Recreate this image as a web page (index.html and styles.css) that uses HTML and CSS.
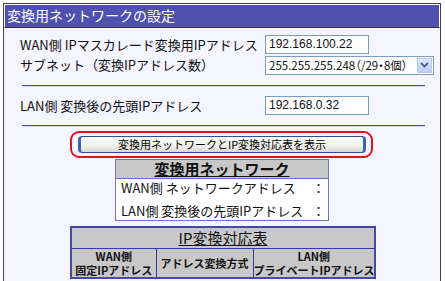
FILE: index.html
```html
<!DOCTYPE html>
<html lang="ja">
<head>
<meta charset="utf-8">
<link rel="stylesheet" href="styles.css">
</head>
<body>
<div class="panel">
  <div class="title">変換用ネットワークの設定</div>
  <div class="content">
    <div class="row r1">
      <span class="label">WAN側 IPマスカレード変換用IPアドレス</span>
      <span class="input">192.168.100.22</span>
    </div>
    <div class="row r2">
      <span class="label">サブネット（変換IPアドレス数）</span>
      <span class="select"><span class="sel-text">255.255.255.248（/29・8個）</span><span class="sel-btn"><svg width="9" height="6" viewBox="0 0 9 6"><path d="M1 1 L4.5 4.5 L8 1" fill="none" stroke="#4d6185" stroke-width="1.8"/></svg></span></span>
    </div>
    <div class="rule rule1"></div>
    <div class="row r3">
      <span class="label">LAN側 変換後の先頭IPアドレス</span>
      <span class="input">192.168.0.32</span>
    </div>
    <div class="rule rule2"></div>
    <div class="btn-wrap">
      <div class="highlight">
        <div class="button">変換用ネットワークとIP変換対応表を表示</div>
      </div>
    </div>
    <table class="net">
      <tr><th>変換用ネットワーク</th></tr>
      <tr><td><div class="kv"><span>WAN側 ネットワークアドレス</span><span>：</span></div><div class="kv kv2"><span>LAN側 変換後の先頭IPアドレス</span><span>：</span></div></td></tr>
    </table>
    <table class="map">
      <colgroup><col class="c1"><col class="c2"><col class="c3"></colgroup>
      <tr><th colspan="3" class="cap">IP変換対応表</th></tr>
      <tr class="sub"><th>WAN側<br>固定IPアドレス</th><th>アドレス変換方式</th><th>LAN側<br>プライベートIPアドレス</th></tr>
    </table>
  </div>
</div>
</body>
</html>
```

FILE: styles.css
```css
html, body {
  margin: 0;
  padding: 0;
  background: #ffffff;
}
body {
  font-family: "Noto Sans CJK JP", "Noto Sans", sans-serif;
  color: #111;
  overflow: hidden;
  height: 281px;
}
.panel {
  margin: 3px 0 0 3px;
  width: 438px;
  height: 290px;
  border: 1px solid #444;
  border-bottom: none;
  background: #f5f5ff;
  box-sizing: border-box;
}
.title {
  height: 22px;
  line-height: 20px;
  background: #5050b0;
  color: #fff;
  font-size: 14px;
  padding-left: 2px;
  border: 1px solid #fff;
  border-bottom: 1px solid #333;
}
.content {
  padding: 7px 0 0 16px;
}
.row {
  display: flex;
  align-items: center;
  font-size: 13px;
  line-height: 18px;
}
.label {
  width: 245px;
  flex: none;
  white-space: nowrap;
}
.r1 { height: 19px; }
.r2 { height: 20px; margin-top: 1px; }
.r3 { height: 19px; }
.input {
  display: block;
  width: 104px;
  height: 19px;
  box-sizing: border-box;
  border: 1px solid #7f9db9;
  background: #fff;
  font-family: "Liberation Sans", Arial, sans-serif;
  font-size: 12px;
  line-height: 17px;
  padding-left: 3px;
}
.select {
  display: flex;
  width: 169px;
  height: 19px;
  flex: none;
  box-sizing: border-box;
  border: 1px solid #7f9db9;
  background: #fff;
  font-size: 11.5px;
  font-feature-settings: "palt";
  line-height: 17px;
  padding: 0 1px 0 3px;
  align-items: center;
}
.sel-text { flex: 1; white-space: nowrap; overflow: hidden; }
.sel-btn {
  width: 15px;
  height: 15px;
  flex: none;
  background: linear-gradient(#dfe9fb, #b8cdf5);
  border: 1px solid #b5c8ef;
  box-sizing: border-box;
  display: flex;
  align-items: center;
  justify-content: center;
}
.rule {
  width: 403px;
  margin-left: 2px;
  height: 1px;
  background: #4848a8;
  border-bottom: 1px solid #d8d8f0;
}
.rule1 { margin-top: 10px; margin-bottom: 9px; }
.rule2 { margin-top: 10px; margin-bottom: 4px; }
.btn-wrap {
  display: flex;
  padding-left: 50px;
}
.highlight {
  border: 2px solid #e8101c;
  border-radius: 9px;
  padding: 3px 5px 3px 6px;
}
.button {
  width: 288px;
  height: 17px;
  box-sizing: border-box;
  border: 1px solid #2f4f94;
  border-left: 3px solid #3a64b0;
  border-right: 3px solid #3a64b0;
  border-radius: 4px;
  background: linear-gradient(#ffffff, #f0f0ea 60%, #d8d8d0);
  font-size: 11px;
  line-height: 15px;
  text-align: center;
  color: #000;
}
table {
  border-collapse: collapse;
  table-layout: fixed;
}
.net {
  margin: 1px 0 0 95px;
  width: 214px;
  border: 1px solid #7070c8;
}
.net th {
  background: #c8c8c8;
  font-size: 15px;
  line-height: 18px;
  height: 18px;
  padding: 0;
  text-decoration: underline;
  font-weight: bold;
  border: 1px solid #7070c8;
}
.net td {
  background: #fff;
  padding: 0 3px 0 5px;
  font-size: 13px;
  line-height: 18px;
  height: 38px;
}
.kv {
  display: flex;
  justify-content: space-between;
  white-space: nowrap;
}
.kv2 { margin-top: 5px; }
.map {
  margin: 5px 0 0 50px;
  width: 304px;
  border: 2px solid #4848a8;
}
.map th {
  background: #c8c8c8;
  padding: 0;
  border: 1px solid #3838a8;
}
.map .cap {
  font-size: 15px;
  line-height: 20px;
  height: 20px;
  font-weight: normal;
  text-decoration: underline;
}
.map .sub th {
  font-size: 11px;
  line-height: 14px;
  height: 28px;
  font-weight: bold;
  white-space: nowrap;
  overflow: hidden;
}
.c1 { width: 85px; }
.c2 { width: 97px; }
.c3 { width: 122px; }
```
